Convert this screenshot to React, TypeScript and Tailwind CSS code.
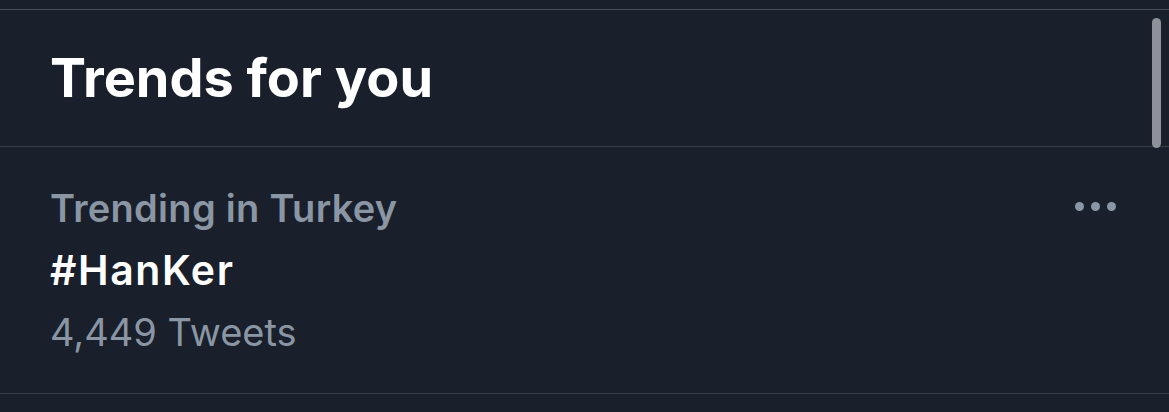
import React from "react";

export default function App() {
  return (
    <div className="w-[1169px] h-[412px] bg-[#19202b] relative overflow-hidden" style={{ fontFamily: "Inter, 'Noto Sans', sans-serif" }}>
      <div className="h-[9px]" />
      <div className="border-t border-[#4a505a]">
        <div className="h-[137px] flex items-center pl-[50px] border-b border-[#3a404a]">
          <h1 className="text-[54px] font-bold text-white leading-none">Trends for you</h1>
        </div>
        <div className="relative h-[247px] border-b border-[#3a404a] pl-[50px] pt-[30px]">
          <div className="text-[38px] font-semibold text-[#8b96a4] tracking-[0.3px] leading-[62px]">Trending in Turkey</div>
          <div className="text-[41px] font-semibold text-white tracking-[1.6px] leading-[62px]">#HanKer</div>
          <div className="text-[38px] text-[#8b96a4] leading-[62px]">4,449 Tweets</div>
          <div className="absolute right-[53px] top-[55px] flex gap-[7px]">
            <span className="w-[9px] h-[9px] rounded-full bg-[#8b96a4]" />
            <span className="w-[9px] h-[9px] rounded-full bg-[#8b96a4]" />
            <span className="w-[9px] h-[9px] rounded-full bg-[#8b96a4]" />
          </div>
        </div>
      </div>
      <div className="absolute left-[1152px] top-[18px] w-[9px] h-[130px] rounded-full bg-[#8e9199]" />
    </div>
  );
}
